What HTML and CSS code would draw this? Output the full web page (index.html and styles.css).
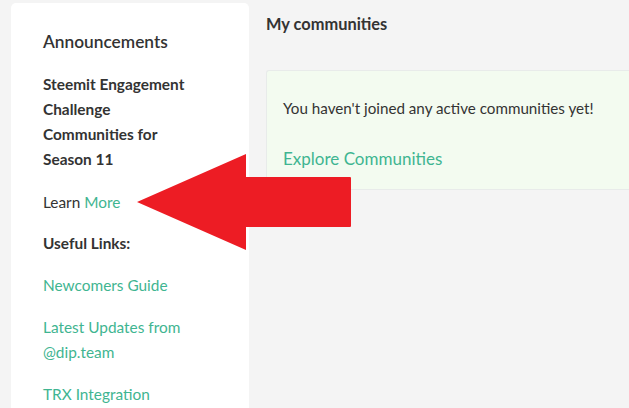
FILE: index.html
```html
<!DOCTYPE html>
<html>
<head>
<meta charset="utf-8">
<link rel="stylesheet" href="styles.css">
</head>
<body>
<div class="page">
  <aside class="sidebar">
    <h2 class="side-title">Announcements</h2>
    <p class="announce">Steemit Engagement<br>Challenge<br>Communities for<br>Season 11</p>
    <p class="learn">Learn <a class="link">More</a></p>
    <h3 class="useful">Useful Links:</h3>
    <p class="item"><a class="link">Newcomers Guide</a></p>
    <p class="item"><a class="link">Latest Updates from<br>@dip.team</a></p>
    <p class="item"><a class="link">TRX Integration</a></p>
  </aside>
  <main class="main">
    <h1 class="main-title">My communities</h1>
    <div class="empty">
      <p class="empty-text">You haven't joined any active communities yet!</p>
      <a class="explore">Explore Communities</a>
    </div>
  </main>
</div>
<svg class="arrow" width="220" height="100" viewBox="0 0 220 100" xmlns="http://www.w3.org/2000/svg">
  <path d="M1 48 L110 0 L110 23 L214 23 Q215 23 215 24 L215 72 Q215 73 214 73 L110 73 L110 96 Z" fill="#ed1c24"/>
</svg>
</body>
</html>
```
FILE: styles.css
```css
html, body {
  margin: 0;
  padding: 0;
  background: #f4f4f4;
  font-family: "Lato", "Noto Sans", sans-serif;
  color: #333;
  overflow: hidden;
  height: 408px;
}
.page {
  display: flex;
  height: 408px;
  box-sizing: border-box;
  padding: 3px 0 0 11px;
  gap: 17px;
}
.sidebar {
  width: 238px;
  box-sizing: border-box;
  background: #fff;
  border-radius: 5px 5px 0 0;
  padding: 28px 16px 0 32px;
  flex-shrink: 0;
  overflow: hidden;
}
.side-title {
  margin: 0 0 19px;
  font-size: 17.3px;
  font-weight: 600;
  line-height: 22px;
}
.announce {
  margin: 0;
  font-size: 15.4px;
  font-weight: 700;
  line-height: 25px;
}
.learn {
  margin: 18px 0 0;
  font-size: 15.4px;
  line-height: 25px;
}
.useful {
  margin: 16px 0 0;
  font-size: 15.4px;
  font-weight: 700;
  line-height: 25px;
}
.item {
  margin: 17px 0 0;
  font-size: 15.4px;
  line-height: 25px;
}
.link {
  color: #3fb591;
  text-decoration: none;
}
.main {
  flex: 1;
  min-width: 0;
}
.main-title {
  margin: 10px 0 0;
  font-size: 16.4px;
  font-weight: 700;
  line-height: 22px;
}
.empty {
  margin-top: 35px;
  box-sizing: border-box;
  background: #f3fbf0;
  border: 1px solid #e8ebea;
  border-right: none;
  border-radius: 3px 0 0 3px;
  padding: 26px 16px 18px;
  height: 120px;
}
.empty-text {
  margin: 0;
  font-size: 15.2px;
  line-height: 22px;
  white-space: nowrap;
}
.explore {
  display: block;
  margin-top: 29px;
  font-size: 17px;
  line-height: 22px;
  color: #3fb591;
}
.arrow {
  position: absolute;
  left: 136px;
  top: 154px;
}
```
